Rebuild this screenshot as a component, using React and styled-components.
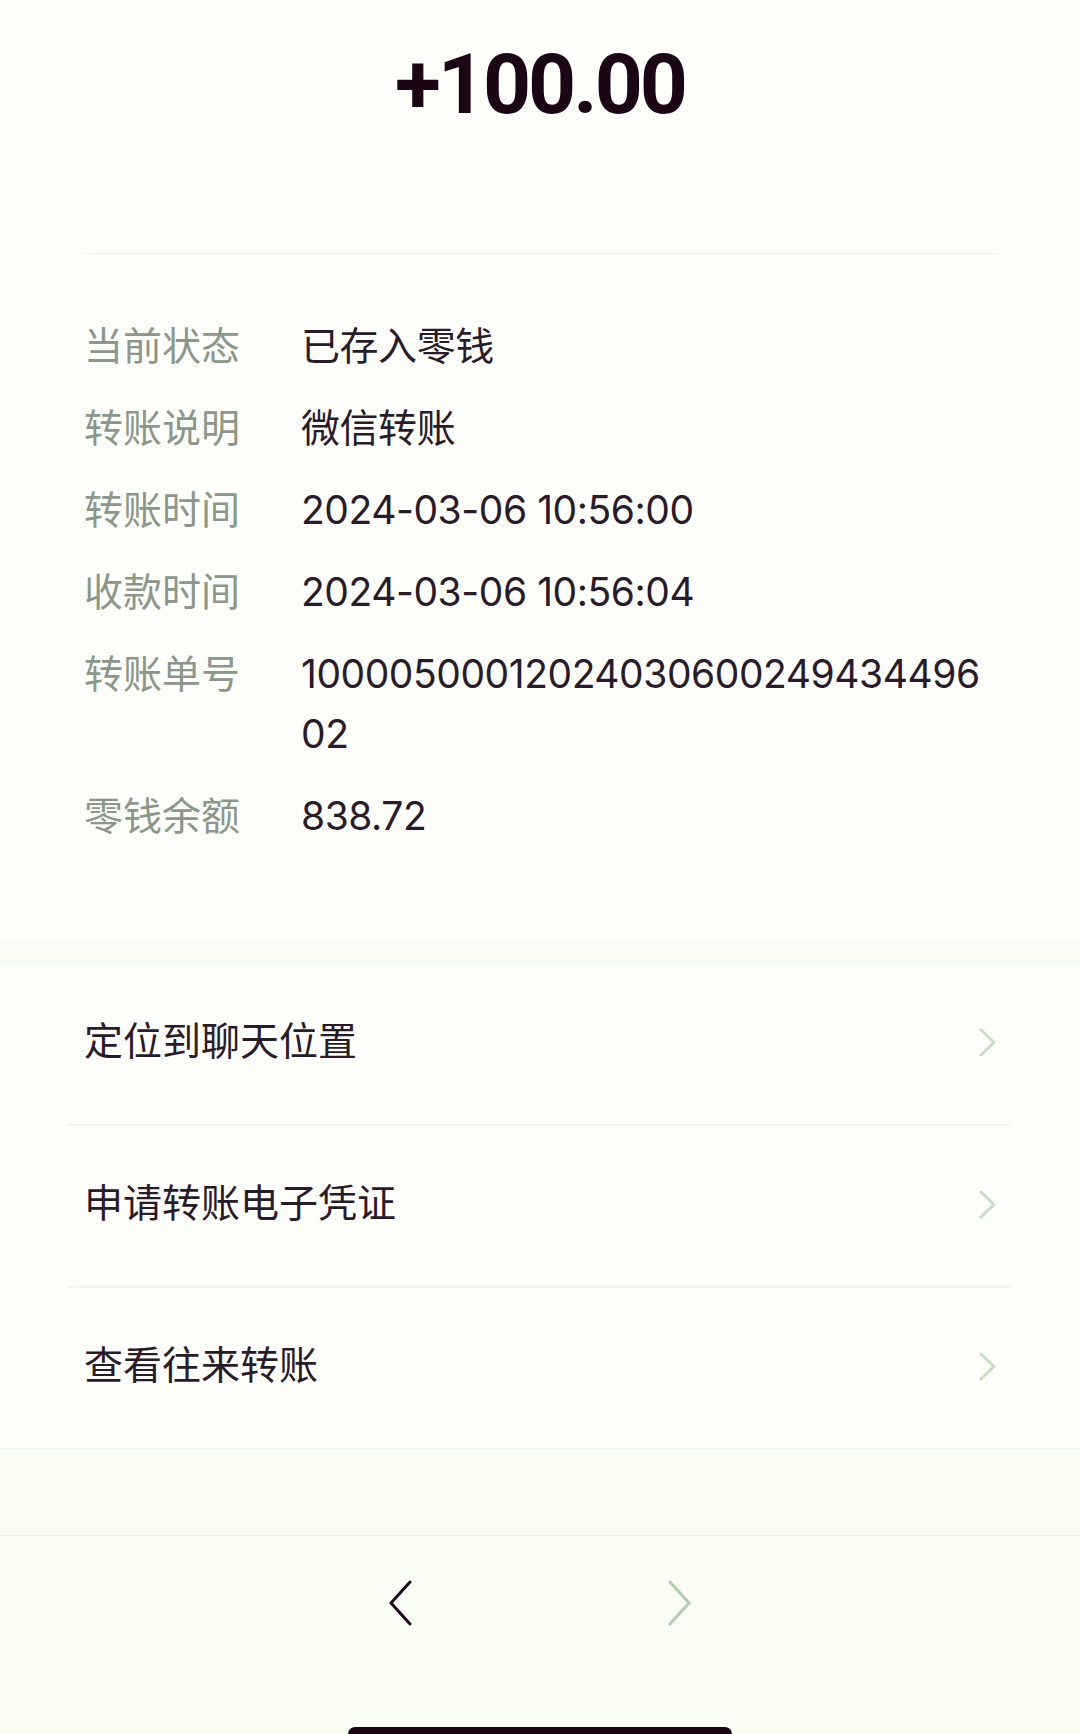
import React from 'react';
import styled, { createGlobalStyle } from 'styled-components';

const GlobalStyle = createGlobalStyle`
  html, body {
    margin: 0;
    padding: 0;
    background: #fefffb;
  }
  body {
    font-family: Inter, "Noto Sans CJK SC", sans-serif;
    -webkit-font-smoothing: antialiased;
  }
`;

const Page = styled.div`
  width: 1080px;
  height: 1734px;
  overflow: hidden;
  display: flex;
  flex-direction: column;
  background: #fefffb;
`;

const Header = styled.header`
  padding-top: 43px;
  display: flex;
  justify-content: center;
`;

const Amount = styled.div`
  font-family: Roboto, "Liberation Sans", sans-serif;
  font-weight: 700;
  font-size: 84px;
  line-height: 84px;
  letter-spacing: -3px;
  color: #1a0615;
`;

const Rule = styled.div`
  height: ${(p) => p.$thick || 1}px;
  margin: ${(p) => p.$top || 0}px ${(p) => p.$right}px 0 ${(p) => p.$left}px;
  background: #eef6e9;
`;

// detail list: label column + value column
const Details = styled.dl`
  margin: 0;
  padding: 62px 82px 96px 84px;
  display: grid;
  grid-template-columns: 217px 685px;
  row-gap: 22px;
  font-family: Inter, "Noto Sans CJK SC", sans-serif;
  font-size: 39px;
  line-height: 60px;
`;

const Label = styled.dt`
  margin: 0;
  color: #8b9789;
`;

const Value = styled.dd`
  margin: 0;
  color: #2a1b2a;
  letter-spacing: -0.45px;
  word-break: break-all;
`;

const Band = styled.div`
  height: ${(p) => p.$h}px;
  background: #f8fcf2;
  border-top: ${(p) => (p.$line ? '1px solid #f0f7ea' : 'none')};
  box-sizing: border-box;
`;

const Menu = styled.nav`
  display: flex;
  flex-direction: column;
`;

const MenuItem = styled.div`
  height: 160px;
  box-sizing: border-box;
  padding: 0 83px 12px 84px;
  display: flex;
  align-items: center;
  justify-content: space-between;
  font-size: 39px;
  color: #2a1b2a;

  svg {
    margin-top: 8px;
  }
`;

const MenuRule = styled.div`
  height: 2px;
  margin: 0 70px 0 68px;
  background: #eff8e9;
`;

const Toolbar = styled.footer`
  flex: 1;
  display: flex;
  flex-direction: column;
  align-items: center;
  padding-top: 44px;
  background: #f9fdf3;
  border-top: 1px solid #edf5e7;
`;

const ArrowRow = styled.div`
  display: flex;
  gap: 256px;
`;

const HomeBar = styled.div`
  margin-top: auto;
  width: 384px;
  height: 7px;
  border-radius: 7px 7px 0 0;
  background: #1a0615;
`;

const Chevron = () => (
  <svg width="19" height="29" viewBox="0 0 19 29" fill="none">
    <polyline points="3,2 16,14.5 3,27" stroke="#c8ddc3" strokeWidth="3" strokeLinecap="round" strokeLinejoin="round" />
  </svg>
);

const NavArrow = ({ dir, color }) => (
  <svg width="23" height="46" viewBox="0 0 23 46" fill="none">
    <polyline
      points={dir === 'left' ? '21,2 2,23 21,44' : '2,2 21,23 2,44'}
      stroke={color}
      strokeWidth="3"
      strokeLinecap="round"
      strokeLinejoin="round"
    />
  </svg>
);

const details = [
  ['当前状态', '已存入零钱'],
  ['转账说明', '微信转账'],
  ['转账时间', '2024-03-06 10:56:00'],
  ['收款时间', '2024-03-06 10:56:04'],
  ['转账单号', '1000050001202403060024943449602'],
  ['零钱余额', '838.72'],
];

const actions = ['定位到聊天位置', '申请转账电子凭证', '查看往来转账'];

export default function App() {
  return (
    <Page>
      <GlobalStyle />
      <Header>
        <Amount>+100.00</Amount>
      </Header>
      <Rule $top={126} $left={83} $right={82} />
      <Details>
        {details.map(([k, v]) => (
          <React.Fragment key={k}>
            <Label>{k}</Label>
            <Value>{v}</Value>
          </React.Fragment>
        ))}
      </Details>
      <Band $h={22} />
      <Menu>
        {actions.map((a, i) => (
          <React.Fragment key={a}>
            {i > 0 && <MenuRule />}
            <MenuItem>
              <span>{a}</span>
              <Chevron />
            </MenuItem>
          </React.Fragment>
        ))}
      </Menu>
      <Band $h={87} $line />
      <Toolbar>
        <ArrowRow>
          <NavArrow dir="left" color="#1e0a1e" />
          <NavArrow dir="right" color="#b4ccb0" />
        </ArrowRow>
        <HomeBar />
      </Toolbar>
    </Page>
  );
}
